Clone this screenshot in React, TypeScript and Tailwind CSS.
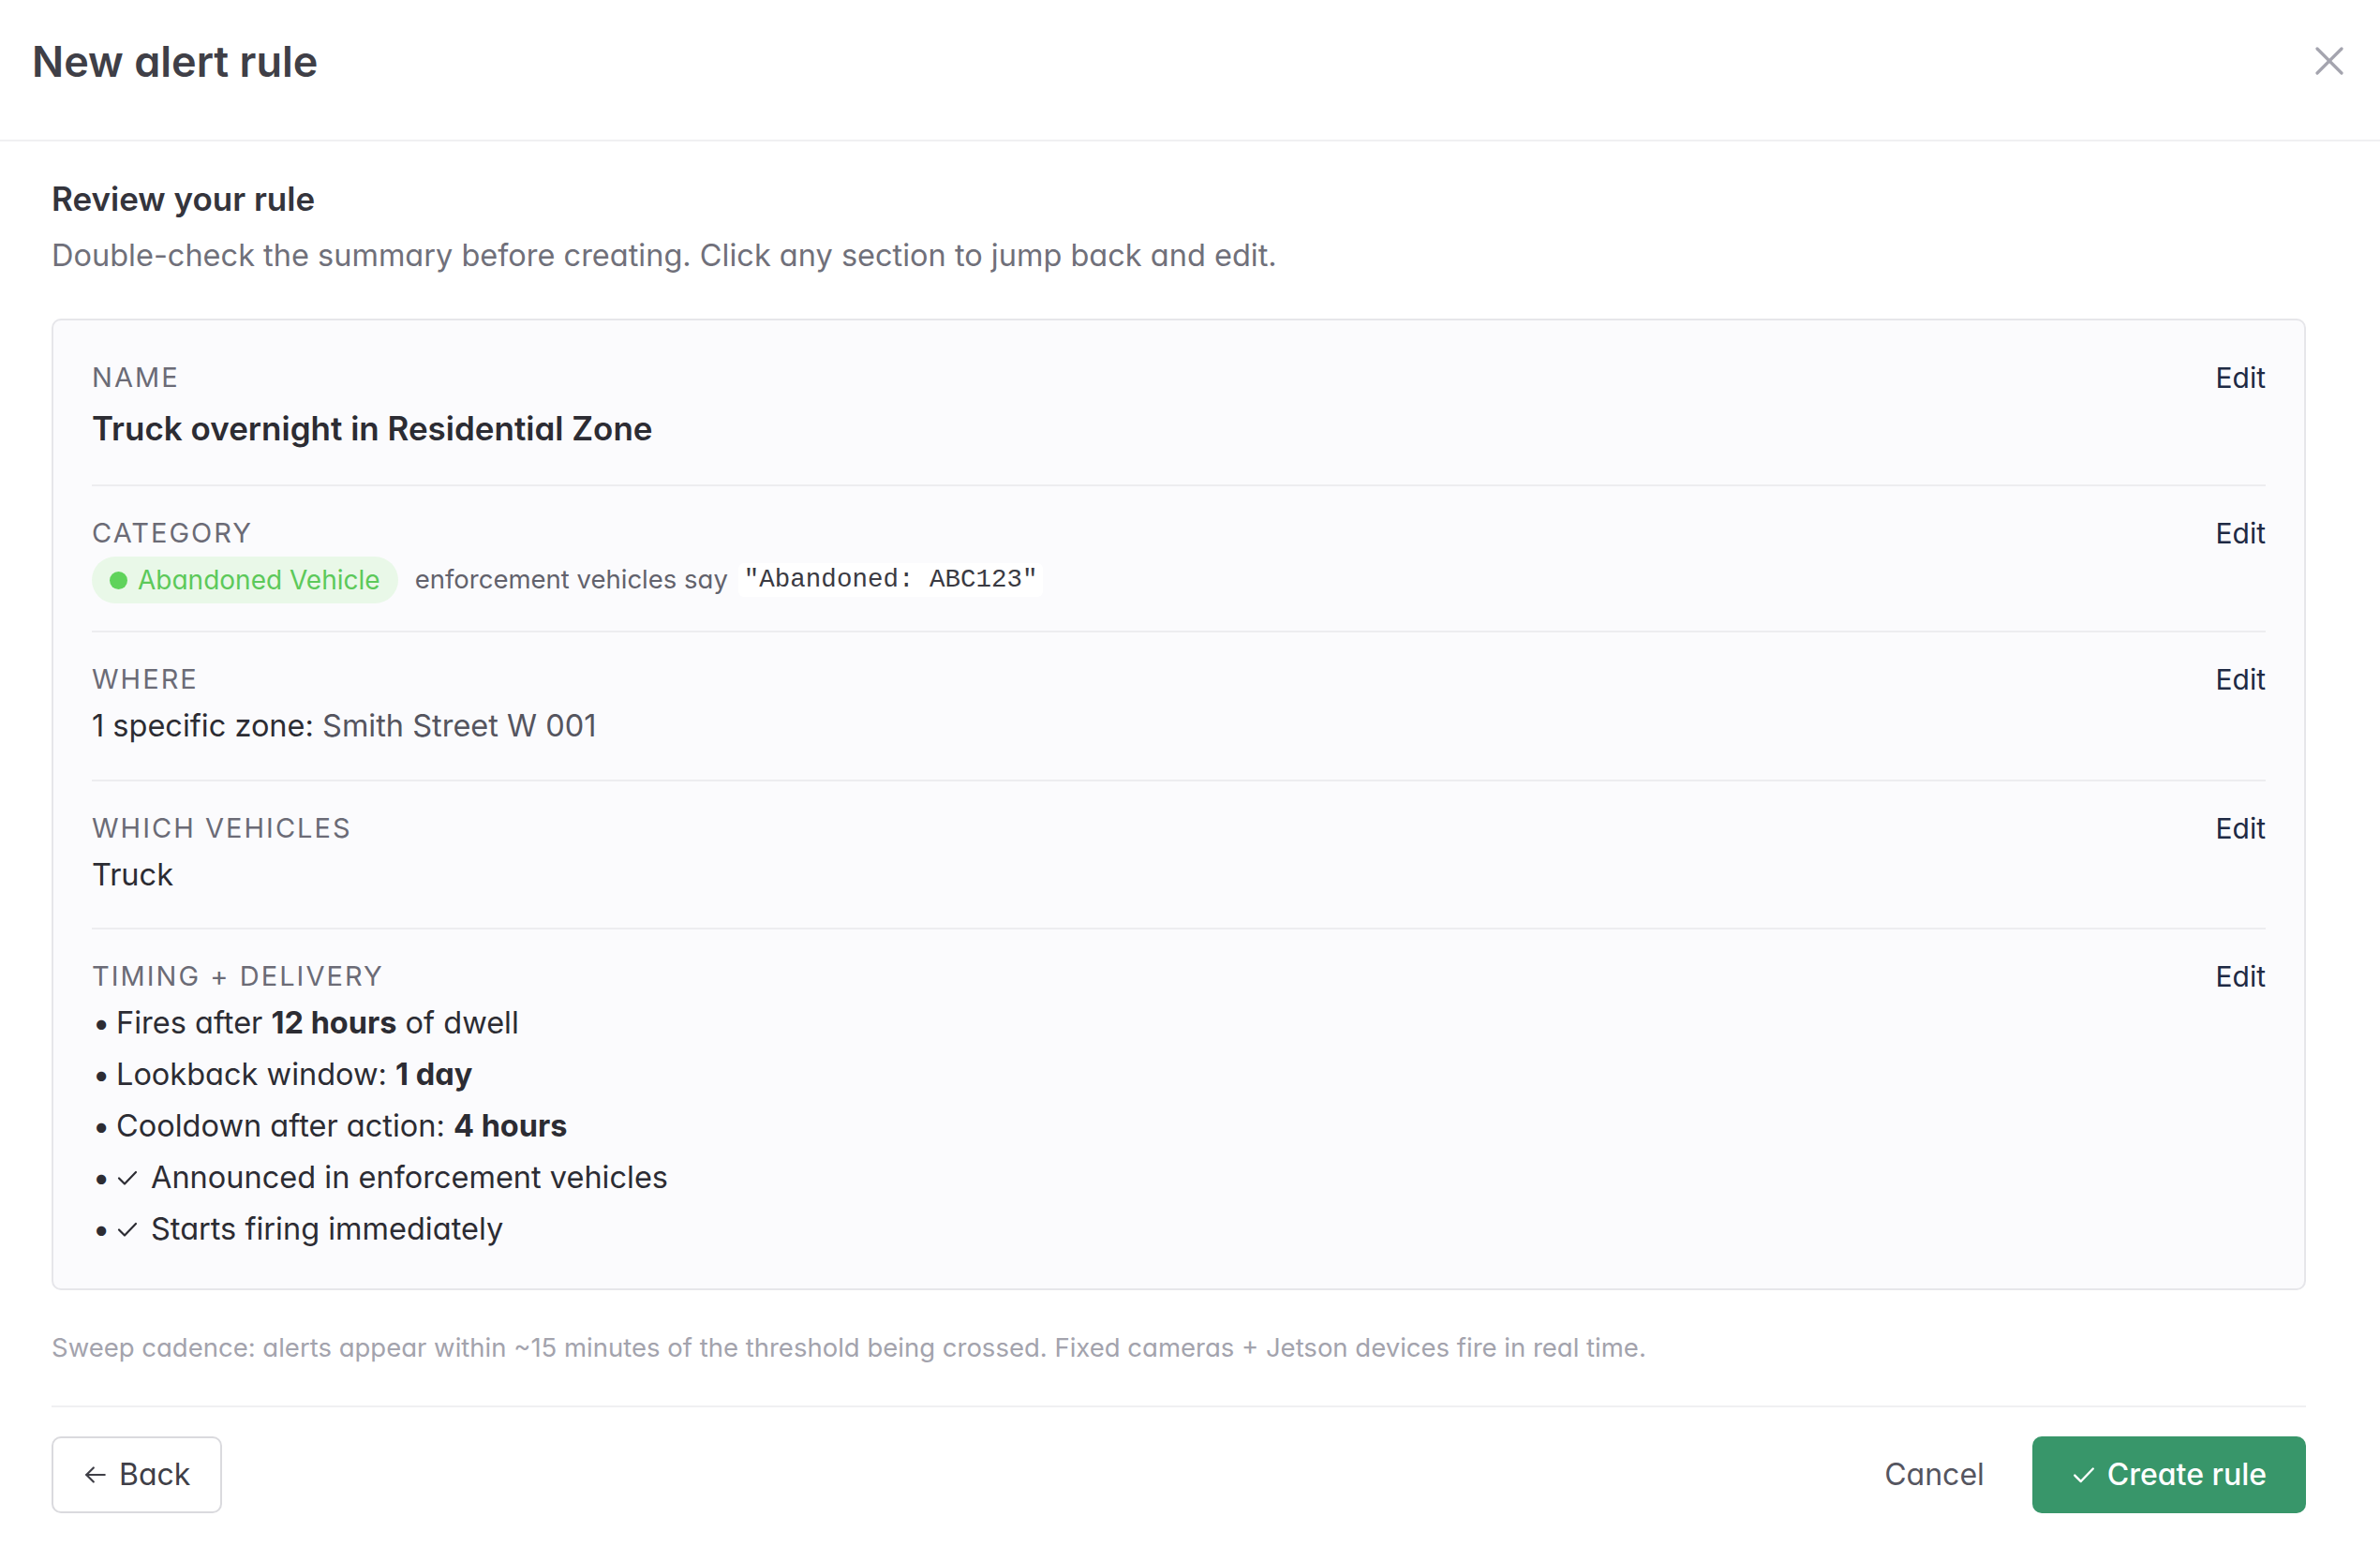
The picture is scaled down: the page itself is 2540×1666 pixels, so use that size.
import type { ReactNode } from 'react';

function CloseIcon() {
  return (
    <svg width="30" height="30" viewBox="0 0 30 30" fill="none" stroke="currentColor" strokeWidth="3.2" strokeLinecap="round">
      <path d="M2 2 L28 28" />
      <path d="M28 2 L2 28" />
    </svg>
  );
}

function CheckIcon({ className }: { className?: string }) {
  return (
    <svg className={className} viewBox="0 0 24 24" fill="none" stroke="currentColor" strokeWidth="2.2" strokeLinecap="round" strokeLinejoin="round">
      <path d="M3 12.5 L9 18.5 L21 6" />
    </svg>
  );
}

function ArrowLeftIcon() {
  return (
    <svg width="26" height="26" viewBox="0 0 24 24" fill="none" stroke="currentColor" strokeWidth="2" strokeLinecap="round" strokeLinejoin="round">
      <path d="M21 12 H3" />
      <path d="M10 5 L3 12 L10 19" />
    </svg>
  );
}

function Section({
  label,
  children,
  first = false,
  className = '',
}: {
  label: string;
  children: ReactNode;
  first?: boolean;
  className?: string;
}) {
  return (
    <div className={`${first ? 'pt-[33px]' : 'border-t-2 border-[#ededf0] pt-[32px]'} ${className}`}>
      <div className="flex items-start justify-between">
        <div className="text-[29px] leading-[36px] uppercase tracking-[0.07em] text-[#6b6b76]">{label}</div>
        <button className="text-[30px] leading-[36px] text-[#1e2a44]">Edit</button>
      </div>
      {children}
    </div>
  );
}

const bullets: ReactNode[] = [
  <>Fires after <b className="font-bold">12 hours</b> of dwell</>,
  <>Lookback window: <b className="font-bold">1 day</b></>,
  <>Cooldown after action: <b className="font-bold">4 hours</b></>,
];

const checks = ['Announced in enforcement vehicles', 'Starts firing immediately'];

export default function App() {
  return (
    <div className="min-h-screen bg-white font-['Inter',sans-serif] [font-feature-settings:'cv11'_1] text-[#2f2f36]">
      <header className="flex h-[151px] items-center justify-between border-b-2 border-[#f0f0f2] pb-[19px] pl-[34px] pr-[39px]">
        <h1 className="text-[45px] font-semibold leading-none text-[#3f3f47]">New alert rule</h1>
        <button className="text-[#a4a4ae]">
          <CloseIcon />
        </button>
      </header>

      <main className="pl-[55px] pr-[79px] pt-[39px]">
        <h2 className="text-[35px] font-semibold leading-[44px] text-[#34343c]">Review your rule</h2>
        <p className="mt-[18px] text-[32.5px] leading-[42px] text-[#70707a]">
          Double-check the summary before creating. Click any section to jump back and edit.
        </p>

        <div className="mt-[46px] rounded-[10px] border-2 border-[#e6e6ea] bg-[#fbfbfd] px-[41px] pt-[10px] pb-[3px]">
          <Section label="Name" first className="pb-[36px]">
            <div className="mt-[12px] text-[35px] font-semibold leading-[48px] text-[#2c2c33]">
              Truck overnight in Residential Zone
            </div>
          </Section>

          <Section label="Category" className="pb-[29px]">
            <div className="mt-[7px] flex items-center gap-[18px]">
              <span className="flex h-[50px] items-center gap-[11px] rounded-full bg-[#e9f8e8] px-[19px] text-[28px] text-[#5cc95a]">
                <span className="h-[19px] w-[19px] rounded-full bg-[#5fd35b]" />
                Abandoned Vehicle
              </span>
              <div className="flex items-center gap-[11px]">
                <span className="text-[27.5px] text-[#62626c]">enforcement vehicles say</span>
                <code className="rounded-[6px] bg-white px-[6px] py-[1px] font-['Liberation_Mono',monospace] text-[27.5px] leading-[34px] text-[#3a3a42]">
                  "Abandoned: ABC123"
                </code>
              </div>
            </div>
          </Section>

          <Section label="Where" className="pb-[35px]">
            <div className="mt-[10px] text-[32.5px] leading-[44px] text-[#2c2c33]">
              1 specific zone: <span className="text-[#55555f]">Smith Street W 001</span>
            </div>
          </Section>

          <Section label="Which vehicles" className="pb-[34px]">
            <div className="mt-[10px] text-[32.5px] leading-[44px] text-[#2c2c33]">Truck</div>
          </Section>

          <Section label="Timing + delivery" className="pb-[33px]">
            <ul className="mt-[4px] text-[32.5px] leading-[55px] text-[#2c2c33]">
              {bullets.map((item, i) => (
                <li key={i} className="flex items-center">
                  <span className="w-[26px] pl-[1px]">•</span>
                  <span>{item}</span>
                </li>
              ))}
              {checks.map((text) => (
                <li key={text} className="flex items-center">
                  <span className="w-[26px] pl-[1px]">•</span>
                  <CheckIcon className="mr-[13px] h-[24px] w-[24px]" />
                  <span>{text}</span>
                </li>
              ))}
            </ul>
          </Section>
        </div>

        <p className="mt-[43px] text-[27.5px] leading-[36px] text-[#a3a3ad]">
          Sweep cadence: alerts appear within ~15 minutes of the threshold being crossed. Fixed cameras + Jetson devices fire in real time.
        </p>

        <div className="mt-[44px] flex items-center justify-between border-t-2 border-[#f0f0f2] pt-[31px] pb-[50px]">
          <button className="flex h-[82px] items-center gap-[12px] rounded-[10px] border-2 border-[#dadade] bg-white px-[32px] text-[32px] text-[#3f3f47]">
            <ArrowLeftIcon />
            Back
          </button>
          <div className="flex items-center gap-[17px]">
            <button className="h-[82px] px-[34px] text-[32px] text-[#55555f]">Cancel</button>
            <button className="flex h-[82px] items-center gap-[12px] rounded-[10px] bg-[#38966a] px-[42px] text-[32px] font-medium text-white">
              <CheckIcon className="h-[26px] w-[26px]" />
              Create rule
            </button>
          </div>
        </div>
      </main>
    </div>
  );
}
